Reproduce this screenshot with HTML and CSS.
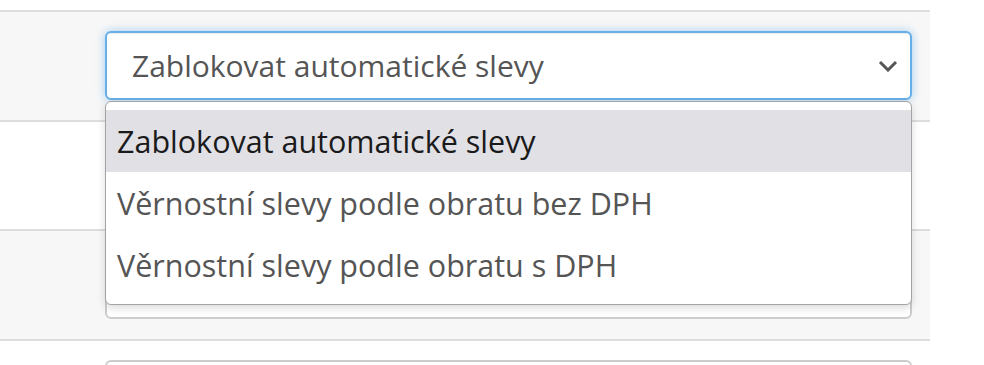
FILE: index.html
```html
<!DOCTYPE html>
<html lang="cs">
<head>
  <meta charset="UTF-8" />
  <title>Slevy</title>
  <link rel="stylesheet" href="styles.css">
</head>
<body>
  <div class="table">
    <div class="row odd">
      <div class="cell">
        <div class="select focused">
          <span>Zablokovat automatické slevy</span>
          <svg class="chevron" width="20" height="12" viewBox="0 0 20 12"><path d="M2 2 L10 10 L18 2" fill="none" stroke="#555" stroke-width="3"/></svg>
        </div>
        <ul class="dropdown">
          <li class="active">Zablokovat automatické slevy</li>
          <li>Věrnostní slevy podle obratu bez DPH</li>
          <li>Věrnostní slevy podle obratu s DPH</li>
        </ul>
      </div>
    </div>
    <div class="row">
      <div class="cell"><div class="select"></div></div>
    </div>
    <div class="row odd">
      <div class="cell"><div class="select"></div></div>
    </div>
    <div class="row">
      <div class="cell"><div class="select"></div></div>
    </div>
  </div>
</body>
</html>
```

FILE: styles.css
```css
* {
  margin: 0;
  padding: 0;
  box-sizing: border-box;
}

body {
  font-family: 'Open Sans', sans-serif;
  background: #fff;
  padding-top: 10px;
}

.table {
  width: 930px;
}

.row {
  border-top: 2px solid #dddddd;
  background-color: #fff;
}

.row.odd {
  background-color: #f7f7f7;
}

.cell {
  position: relative;
  padding: 19px 18px 19.5px 105px;
}

.select {
  height: 69px;
  background-color: #fff;
  border: 2px solid #cccccc;
  border-radius: 6px;
  display: flex;
  align-items: center;
  justify-content: space-between;
  padding: 0 12px 0 25px;
  font-size: 30px;
  color: #555;
}

.select.focused {
  border-color: #66afe9;
  box-shadow: inset 0 1px 1px rgba(0, 0, 0, 0.075), 0 0 10px rgba(102, 175, 233, 0.6);
}

.dropdown {
  position: absolute;
  top: 89px;
  left: 105px;
  right: 18px;
  z-index: 10;
  list-style: none;
  background-color: #fff;
  border: 1px solid #a3a3a3;
  border-radius: 6px;
  box-shadow: 0 3px 8px rgba(0, 0, 0, 0.15);
  padding: 8px 0;
  font-size: 30.5px;
  color: #555;
}

.dropdown li {
  height: 62px;
  line-height: 62px;
  padding-left: 11px;
}

.dropdown li.active {
  background-color: #e1e0e5;
  color: #1a1a1a;
}
```
